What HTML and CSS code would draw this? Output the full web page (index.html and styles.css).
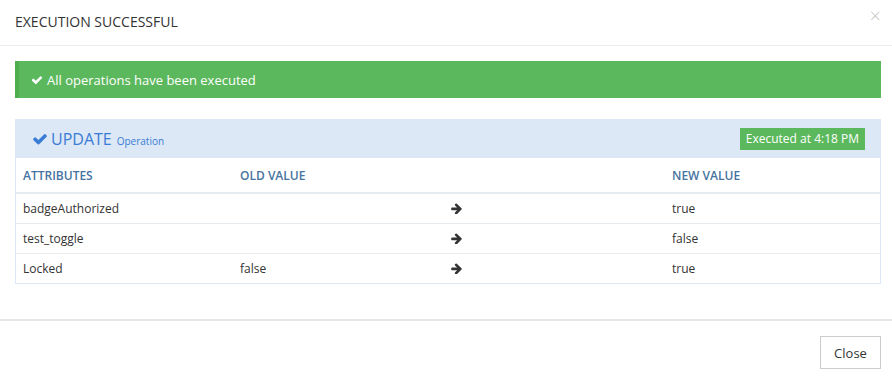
FILE: index.html
```html
<!DOCTYPE html>
<html>
  <head>
    <meta charset="utf-8">
    <title>Execution successful</title>
    <link rel="stylesheet" href="styles.css">
  </head>
  <body>
    <div class="modal">
      <div class="modal-header">
        <h4 class="modal-title">Execution successful</h4>
        <span class="close">&times;</span>
      </div>

      <div class="modal-body">
        <div class="alert">
          <svg class="check" viewBox="0 0 1792 1792" width="12" height="12"><path d="M1671 566q0 40-28 68l-724 724-136 136q-28 28-68 28t-68-28l-136-136-362-362q-28-28-28-68t28-68l136-136q28-28 68-28t68 28l294 295 656-657q28-28 68-28t68 28l136 136q28 28 28 68z"/></svg>
          All operations have been executed
        </div>

        <div class="panel">
          <div class="panel-heading">
            <div class="op">
              <svg class="check" viewBox="0 0 1792 1792" width="16" height="16"><path d="M1671 566q0 40-28 68l-724 724-136 136q-28 28-68 28t-68-28l-136-136-362-362q-28-28-28-68t28-68l136-136q28-28 68-28t68 28l294 295 656-657q28-28 68-28t68 28l136 136q28 28 28 68z"/></svg>
              <span class="op-name">UPDATE</span>
              <span class="op-label">Operation</span>
            </div>
            <span class="badge">Executed at 4:18 PM</span>
          </div>
          <table class="changes">
            <thead>
              <tr>
                <th class="col-attr">Attributes</th>
                <th class="col-old">Old value</th>
                <th class="col-arrow"></th>
                <th>New value</th>
              </tr>
            </thead>
            <tbody>
              <tr>
                <td>badgeAuthorized</td>
                <td></td>
                <td class="arrow"><svg viewBox="0 0 1472 1536" width="11" height="11"><path d="M1472 832q0 54-37 91l-651 651q-39 37-91 37-51 0-90-37l-75-75q-38-38-38-91t38-91l293-293h-704q-52 0-84.5-37.5t-32.5-90.5v-128q0-53 32.5-90.5t84.5-37.5h704l-293-294q-38-36-38-90t38-90l75-75q38-38 90-38 53 0 91 38l651 651q37 35 37 90z"/></svg></td>
                <td>true</td>
              </tr>
              <tr>
                <td>test_toggle</td>
                <td></td>
                <td class="arrow"><svg viewBox="0 0 1472 1536" width="11" height="11"><path d="M1472 832q0 54-37 91l-651 651q-39 37-91 37-51 0-90-37l-75-75q-38-38-38-91t38-91l293-293h-704q-52 0-84.5-37.5t-32.5-90.5v-128q0-53 32.5-90.5t84.5-37.5h704l-293-294q-38-36-38-90t38-90l75-75q38-38 90-38 53 0 91 38l651 651q37 35 37 90z"/></svg></td>
                <td>false</td>
              </tr>
              <tr>
                <td>Locked</td>
                <td>false</td>
                <td class="arrow"><svg viewBox="0 0 1472 1536" width="11" height="11"><path d="M1472 832q0 54-37 91l-651 651q-39 37-91 37-51 0-90-37l-75-75q-38-38-38-91t38-91l293-293h-704q-52 0-84.5-37.5t-32.5-90.5v-128q0-53 32.5-90.5t84.5-37.5h704l-293-294q-38-36-38-90t38-90l75-75q38-38 90-38 53 0 91 38l651 651q37 35 37 90z"/></svg></td>
                <td>true</td>
              </tr>
            </tbody>
          </table>
        </div>
      </div>

      <div class="modal-footer">
        <button class="btn">Close</button>
      </div>
    </div>
  </body>
</html>
```

FILE: styles.css
```css
body, div, h4, table, th, td, button {margin:0;padding:0}

body {
  background: #fff;
  font-family: 'Open Sans', 'DejaVu Sans', sans-serif;
  font-size: 12px;
  color: #333;
}

.modal {
  width: 892px;
}

.modal-header {
  height: 46px;
  box-sizing: border-box;
  padding: 0 15px;
  border-bottom: 1px solid #ececec;
  display: flex;
  align-items: center;
  justify-content: space-between;
}

.modal-title {
  font-size: 14px;
  font-weight: normal;
  text-transform: uppercase;
  color: #333;
  margin-top: -2px;
}

.close {
  font-size: 20px;
  font-weight: 300;
  color: #c8c8c8;
  line-height: 1;
  margin-top: -13px;
  margin-right: -4px;
}

.modal-body {
  padding: 15px 11px 35px 15px;
}

.alert {
  height: 37px;
  box-sizing: border-box;
  background: #5cb85c;
  border-left: 4px solid #4cae4c;
  color: #fff;
  font-size: 13px;
  padding-left: 12px;
  display: flex;
  align-items: center;
  gap: 4px;
}

.alert .check {
  fill: #fff;
}

.panel {
  margin-top: 21px;
  border: 1px solid #dce8f6;
}

.panel-heading {
  height: 38px;
  box-sizing: border-box;
  background: #dce8f6;
  padding: 0 15px 0 16px;
  display: flex;
  align-items: center;
  justify-content: space-between;
}

.op {
  display: flex;
  align-items: baseline;
  color: #3a7bd5;
}

.op .check {
  fill: #3a7bd5;
  margin-right: 3px;
  align-self: center;
}

.op-name {
  font-size: 16px;
  margin-right: 5px;
}

.op-label {
  font-size: 10px;
}

.badge {
  background: #5cb85c;
  color: #fff;
  font-size: 12px;
  height: 22px;
  line-height: 22px;
  padding: 0 6px;
}

.changes {
  width: 100%;
  border-collapse: collapse;
  table-layout: fixed;
}

.changes th {
  height: 35px;
  box-sizing: border-box;
  text-align: left;
  text-transform: uppercase;
  font-weight: 600;
  color: #46739f;
  padding: 0 7px;
  border-bottom: 2px solid #e6ebf0;
}

.changes td {
  height: 29px;
  padding: 0 7px;
  border-top: 1px solid #e6ebf0;
  color: #333;
}

.changes tbody tr:first-child td {
  border-top: none;
}

.col-attr { width: 217px; }
.col-old { width: 215px; }
.col-arrow { width: 217px; }

.changes .arrow {
  padding-left: 3px;
}

.changes .arrow svg {
  display: block;
  fill: #333;
}

.modal-footer {
  border-top: 2px solid #e6e6e6;
  padding: 15px 11px 15px 15px;
  display: flex;
  justify-content: flex-end;
}

.btn {
  height: 33px;
  width: 61px;
  background: #fff;
  border: 1px solid #ccc;
  font-family: 'Open Sans', 'DejaVu Sans', sans-serif;
  font-size: 13px;
  color: #333;
}
```
